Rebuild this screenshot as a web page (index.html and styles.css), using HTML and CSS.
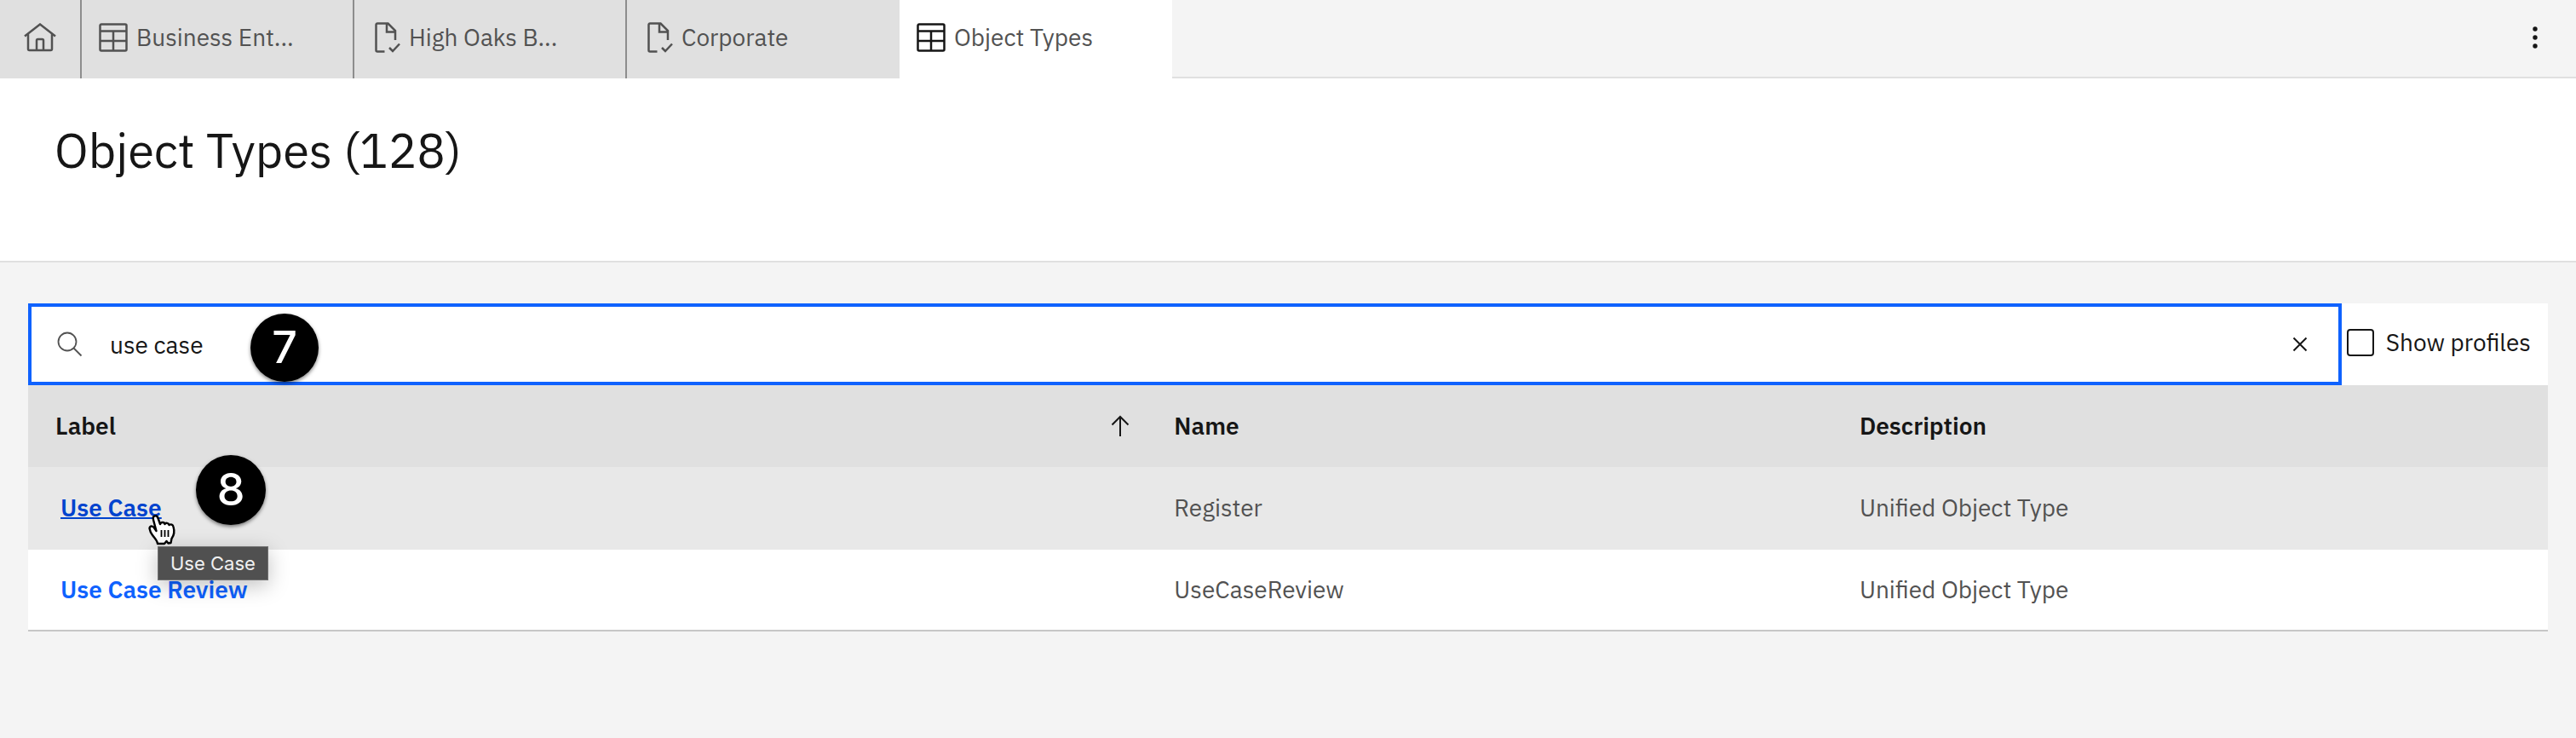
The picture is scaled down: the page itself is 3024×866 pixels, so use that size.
FILE: index.html
```html
<!DOCTYPE html>
<html lang="en">
<head>
<meta charset="utf-8">
<title>Object Types</title>
<link rel="stylesheet" href="styles.css">
</head>
<body>
<svg class="sprite" aria-hidden="true">
  <symbol id="i-table" viewBox="0 0 34 34"><path d="M3 1.500h28a1.500 1.500 0 0 1 1.500 1.500v28a1.500 1.500 0 0 1-1.500 1.500H3A1.500 1.500 0 0 1 1.500 31V3A1.500 1.500 0 0 1 3 1.500zM1.500 9.500h31M1.500 21h31M17 9.500v23" fill="none" stroke="currentColor" stroke-width="2.500"/></symbol>
  <symbol id="i-doc" viewBox="0 0 30 36"><path d="M11.500 34.500H3a1.500 1.500 0 0 1-1.500-1.500V3A1.500 1.500 0 0 1 3 1.500h12.500L24 10v11M14 2v9.500h10M17 30l4 4 8-8.500" fill="none" stroke="currentColor" stroke-width="2.500"/></symbol>
</svg>
<nav class="tabs" aria-label="Open tabs">
  <button class="tab tab-home" aria-label="Home">
    <svg width="38" height="34" viewBox="0 0 38 34"><path d="M1 15.500L19 1.500l18 14M5 13v17.500A1.500 1.500 0 0 0 6.500 32h25a1.500 1.500 0 0 0 1.500-1.500V13M15 32V20.500a1.500 1.500 0 0 1 1.500-1.500h5a1.500 1.500 0 0 1 1.500 1.500V32" fill="none" stroke="currentColor" stroke-width="2.500"/></svg>
  </button>
  <button class="tab"><svg width="34" height="34"><use href="#i-table"/></svg><span>Business Ent...</span></button>
  <button class="tab"><svg class="doc" width="30" height="36"><use href="#i-doc"/></svg><span>High Oaks B...</span></button>
  <button class="tab tab-last"><svg class="doc" width="30" height="36"><use href="#i-doc"/></svg><span>Corporate</span></button>
  <button class="tab tab-active" aria-current="page"><svg width="34" height="34"><use href="#i-table"/></svg><span>Object Types</span></button>
  <button class="overflow" aria-label="More options">
    <svg width="32" height="32" viewBox="0 0 32 32" fill="currentColor"><circle cx="16" cy="6" r="2.700"/><circle cx="16" cy="16" r="2.700"/><circle cx="16" cy="26" r="2.700"/></svg>
  </button>
</nav>
<header class="page-header"><h1>Object Types (128)</h1></header>
<main class="content">
  <div class="toolbar">
    <div class="search">
      <svg width="30" height="30" viewBox="0 0 30 30" fill="none" stroke="currentColor" stroke-width="1.800"><circle cx="12" cy="12" r="10.500"/><path d="M19.500 19.500L28.500 28.500"/></svg>
      <input type="text" value="use case" aria-label="Search">
      <button class="clear" aria-label="Clear search"><svg width="18" height="18" viewBox="0 0 18 18" stroke="currentColor" stroke-width="2"><path d="M1.500 1.500l15 15M16.500 1.500l-15 15"/></svg></button>
      <span class="badge badge-search">7</span>
    </div>
    <label class="check"><input type="checkbox">Show profiles</label>
  </div>
  <table class="grid">
    <thead>
      <tr>
        <th class="col-label" scope="col" aria-sort="ascending"><span class="sort">Label<svg width="22" height="26" viewBox="0 0 22 26" fill="none" stroke="currentColor" stroke-width="2"><path d="M11 25V2M1.500 11.500L11 2l9.500 9.500"/></svg></span></th>
        <th class="col-name" scope="col">Name</th>
        <th scope="col">Description</th>
      </tr>
    </thead>
    <tbody>
      <tr class="hovered">
        <td><span class="anchor"><a href="#">Use Case</a><span class="badge badge-row">8</span>
          <svg class="cursor" width="36" height="40" viewBox="0 0 36 40"><path d="M7 8C5.500 3 11 1.500 12.500 6l2.500 7c1-3 5-2.500 5.500 0 1-2 4.500-1.500 5 1 2-1.500 4.500 0 5 2 1.500 5 1 10-2 14l-1 5-3 .5-2-2.500-2.500 3h-8c-.5-4-4-7-6-10-2-2.500-3-5-3.500-8 .5-3.500 4-3 5.500-.5l2.500 3.500z" fill="#fff" stroke="#000" stroke-width="2.400" stroke-linejoin="round"/><path d="M16.500 20v8M20.500 20v8M24.500 20v8" stroke="#000" stroke-width="1.800"/></svg>
          <span class="tooltip" role="tooltip">Use Case</span></span></td>
        <td>Register</td>
        <td>Unified Object Type</td>
      </tr>
      <tr>
        <td><span class="anchor"><a href="#">Use Case Review</a></span></td>
        <td>UseCaseReview</td>
        <td>Unified Object Type</td>
      </tr>
    </tbody>
  </table>
</main>
</body>
</html>
```
FILE: styles.css
```css
* { box-sizing: border-box; }
body { margin: 0; background: #f4f4f4; color: #161616; font: 28px/36px "IBM Plex Sans", "Noto Sans", sans-serif; }
button { border: 0; padding: 0; background: none; color: inherit; font: inherit; }
svg { flex: none; display: block; }
.sprite { position: absolute; width: 0; height: 0; }

.tabs { display: flex; height: 92px; }
.tab { display: flex; align-items: center; gap: 10px; width: 320px; padding: 0 20px 4px; background: #e0e0e0; border-right: 2px solid #8d8d8d; color: #525252; }
.tab-home { width: 96px; justify-content: center; }
.tab-last, .tab-active { border-right: 0; }
.tab-active { background: #fff; }
.tab-active svg { color: #161616; }
.doc { margin-left: 4px; }
.overflow { flex: 1; display: flex; justify-content: flex-end; align-items: center; padding: 0 32px 2px; border-bottom: 2px solid #e0e0e0; }

.page-header { height: 216px; padding: 48px 64px; background: #fff; border-bottom: 2px solid #e0e0e0; }
.page-header h1 { margin: 0; font-size: 56px; line-height: 72px; font-weight: 400; }

.content { padding: 48px 33px; }
.toolbar { display: flex; height: 96px; background: #fff; }
.search { position: relative; flex: 1; display: flex; align-items: center; padding: 0 36px 0 30px; border: 4px solid #0f62fe; color: #525252; }
.search input { flex: 1; min-width: 0; margin: 0 0 0 32px; padding: 2px 0 0; border: 0; outline: 0; background: none; color: #161616; font: inherit; }
.clear { color: #161616; }
.check { display: flex; align-items: center; gap: 14px; padding: 0 20px 4px 6px; }
.check input { appearance: none; width: 32px; height: 32px; margin: 0; border: 2px solid #161616; border-radius: 4px; }

.grid { width: 100%; border-collapse: separate; border-spacing: 0; table-layout: fixed; text-align: left; }
.grid th { height: 96px; padding: 0 32px; background: #e0e0e0; font-weight: 600; }
.grid td { height: 96px; padding: 0 32px; background: #fff; border-bottom: 2px solid #c6c6c6; color: #525252; }
.grid .hovered td { height: 97px; padding-bottom: 2px; background: #e8e8e8; border-bottom: 0; }
.grid .col-label { width: 44.400%; padding-right: 20px; }
.col-name { width: 27.200%; }
.sort { display: flex; justify-content: space-between; align-items: center; }
.anchor { position: relative; padding-left: 6px; }
.grid a { color: #0f62fe; font-weight: 600; text-decoration: none; }
.hovered .anchor a { color: #0043ce; text-decoration: underline; text-decoration-thickness: 2px; }

.badge { position: absolute; display: flex; align-items: center; justify-content: center; width: 80px; height: 80px; border-radius: 50%; background: #000; color: #fff; font: 500 52px/1 Inter, sans-serif; box-shadow: 0 2px 4px rgba(0, 0, 0, .5); }
.badge-search { left: 257px; top: 8px; }
.badge-row { left: 165px; top: -43px; width: 82px; height: 82px; }
.cursor { position: absolute; left: 108px; top: 25px; }
.tooltip { position: absolute; left: 120px; top: 64px; padding: 0 14px; border: 1px solid #717171; background: #505050; color: #f0f0f0; font: 400 22px/38px Inter, sans-serif; white-space: nowrap; box-shadow: 0 6px 24px rgba(0, 0, 0, .25); z-index: 1; }
```
